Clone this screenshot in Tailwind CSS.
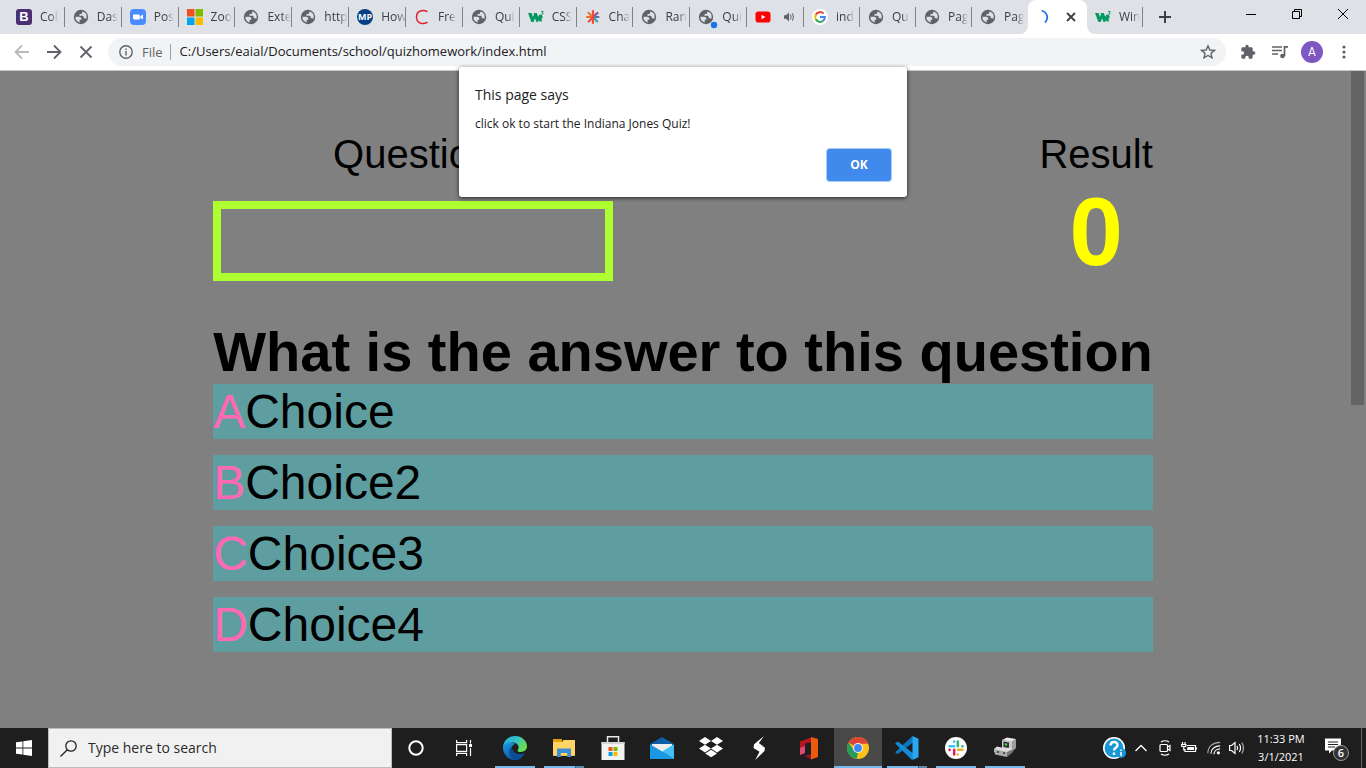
<!DOCTYPE html>
<html lang="en">
<head>
<meta charset="utf-8">
<title>Quiz</title>
<script src="https://cdn.jsdelivr.net/npm/@tailwindcss/browser@4"></script>
</head>
<body class="relative flex min-h-screen flex-col overflow-hidden bg-[#808080] font-['Open_Sans',sans-serif] text-[#202124]">

<svg class="hidden" aria-hidden="true">
  <symbol id="globe" viewBox="0 0 16 16">
    <circle cx="8" cy="8" r="7.200" fill="#5f6368"/>
    <path fill="#dee1e6" d="M2.400 7.800h3.800c1.300 0 2.100.9 2.100 2v.9H6.700v2.700A5.600 5.600 0 0 1 2.400 7.800zM9.200 2.600v.9c0 .9-.7 1.600-1.600 1.600H6.500v1.600h2.700c1 0 1.500.6 1.500 1.400v1.100h1.500c.5 0 .9.3 1.100.7 1.100-3.100 0-6.500-4.100-7.300z"/>
  </symbol>
  <symbol id="w3" viewBox="0 0 16 16">
    <path fill="#059862" d="M0 4h3.600l1.300 3.800L6 5.800 5.400 4h3.400l1.400 3.800 1.300-2.300 1.700.3c1.800.7 2 3 .3 4.200l.5 2.300c-1.200.7-2.600.1-3.200-1.300l-.6 2H8.500L7 9.200 5.600 13H3.400z"/>
    <path fill="none" stroke="#059862" stroke-width="1" d="M13.200 2.500h2L14.200 3.700c1.600.1 1.300 1.900-.9 1.500"/>
  </symbol>
</svg>

<header>
  <div class="flex h-[34px] bg-[#dee1e6] pl-2 text-xs text-[#3c4043]">
    <nav aria-label="Tabs" class="flex min-w-0 flex-1">
      <a href="#" class="relative flex min-w-0 flex-[57] items-center pl-2 after:absolute after:right-0 after:h-5 after:w-px after:bg-[#808388]">
        <span class="flex size-4 shrink-0 items-center justify-center rounded-[3px] bg-[#4a2f73] font-['Liberation_Sans'] text-[13px] font-bold text-white">B</span>
        <span class="ml-2 shrink-0 [mask-image:linear-gradient(to_right,black_60%,transparent)]">Col</span></a>
      <a href="#" class="relative flex min-w-0 flex-[57] items-center pl-2 after:absolute after:right-0 after:h-5 after:w-px after:bg-[#808388]">
        <svg class="size-4 shrink-0"><use href="#globe"/></svg>
        <span class="ml-2 shrink-0 [mask-image:linear-gradient(to_right,black_60%,transparent)]">Das</span></a>
      <a href="#" class="relative flex min-w-0 flex-[57] items-center pl-2 after:absolute after:right-0 after:h-5 after:w-px after:bg-[#808388]">
        <svg class="size-4 shrink-0" viewBox="0 0 16 16"><rect width="16" height="16" rx="4" fill="#4a8cff"/><path fill="#fff" d="M3 5.500h5.500c.8 0 1.300.5 1.300 1.200v3.800H4.300C3.500 10.500 3 10 3 9.300zM10.300 7.200 13 5.500v5l-2.700-1.700z"/></svg>
        <span class="ml-2 shrink-0 [mask-image:linear-gradient(to_right,black_60%,transparent)]">Pos</span></a>
      <a href="#" class="relative flex min-w-0 flex-[57] items-center pl-2 after:absolute after:right-0 after:h-5 after:w-px after:bg-[#808388]">
        <svg class="size-4 shrink-0" viewBox="0 0 16 16"><path fill="#f25022" d="M0 0h7.500v7.500H0z"/><path fill="#7fba00" d="M8.500 0H16v7.500H8.500z"/><path fill="#00a4ef" d="M0 8.500h7.500V16H0z"/><path fill="#ffb900" d="M8.500 8.500H16V16H8.500z"/></svg>
        <span class="ml-2 shrink-0 [mask-image:linear-gradient(to_right,black_60%,transparent)]">Zoo</span></a>
      <a href="#" class="relative flex min-w-0 flex-[57] items-center pl-2 after:absolute after:right-0 after:h-5 after:w-px after:bg-[#808388]">
        <svg class="size-4 shrink-0"><use href="#globe"/></svg>
        <span class="ml-2 shrink-0 [mask-image:linear-gradient(to_right,black_60%,transparent)]">Exte</span></a>
      <a href="#" class="relative flex min-w-0 flex-[57] items-center pl-2 after:absolute after:right-0 after:h-5 after:w-px after:bg-[#808388]">
        <svg class="size-4 shrink-0"><use href="#globe"/></svg>
        <span class="ml-2 shrink-0 [mask-image:linear-gradient(to_right,black_60%,transparent)]">http</span></a>
      <a href="#" class="relative flex min-w-0 flex-[57] items-center pl-2 after:absolute after:right-0 after:h-5 after:w-px after:bg-[#808388]">
        <span class="flex size-4 shrink-0 items-center justify-center rounded-full bg-[#063f86] text-[9px] font-bold text-white">MP</span>
        <span class="ml-2 shrink-0 [mask-image:linear-gradient(to_right,black_60%,transparent)]">How</span></a>
      <a href="#" class="relative flex min-w-0 flex-[57] items-center pl-2 after:absolute after:right-0 after:h-5 after:w-px after:bg-[#808388]">
        <svg class="size-4 shrink-0" viewBox="0 0 16 16" fill="none" stroke="#e0202c" stroke-width="1.500"><path d="M13.500 2.600C9 .2 2.500 1.500 2.500 8s6.500 8 11 5.200"/></svg>
        <span class="ml-2 shrink-0 [mask-image:linear-gradient(to_right,black_60%,transparent)]">Fre</span></a>
      <a href="#" class="relative flex min-w-0 flex-[57] items-center pl-2 after:absolute after:right-0 after:h-5 after:w-px after:bg-[#808388]">
        <svg class="size-4 shrink-0"><use href="#globe"/></svg>
        <span class="ml-2 shrink-0 [mask-image:linear-gradient(to_right,black_60%,transparent)]">Qui</span></a>
      <a href="#" class="relative flex min-w-0 flex-[57] items-center pl-2 after:absolute after:right-0 after:h-5 after:w-px after:bg-[#808388]">
        <svg class="size-4 shrink-0"><use href="#w3"/></svg>
        <span class="ml-2 shrink-0 [mask-image:linear-gradient(to_right,black_60%,transparent)]">CSS</span></a>
      <a href="#" class="relative flex min-w-0 flex-[57] items-center pl-2 after:absolute after:right-0 after:h-5 after:w-px after:bg-[#808388]">
        <svg class="size-4 shrink-0" viewBox="0 0 16 16" stroke-width="2.200" stroke-linecap="round"><path stroke="#8b4a9c" d="m8 8 4.500-4"/><path stroke="#5a6fb0" d="M8 8h5.500"/><path stroke="#35a5b0" d="m8 8 4.300 4.500"/><path stroke="#f5702c" d="M8 8 3.500 4M8 8H2"/><path stroke="#f04a3c" d="m8 8-4.200 4.500M8 2v12"/></svg>
        <span class="ml-2 shrink-0 [mask-image:linear-gradient(to_right,black_60%,transparent)]">Cha</span></a>
      <a href="#" class="relative flex min-w-0 flex-[57] items-center pl-2 after:absolute after:right-0 after:h-5 after:w-px after:bg-[#808388]">
        <svg class="size-4 shrink-0"><use href="#globe"/></svg>
        <span class="ml-2 shrink-0 [mask-image:linear-gradient(to_right,black_60%,transparent)]">Ran</span></a>
      <a href="#" class="relative flex min-w-0 flex-[57] items-center pl-2 after:absolute after:right-0 after:h-5 after:w-px after:bg-[#808388]">
        <svg class="size-4 shrink-0 overflow-visible" viewBox="0 0 16 16"><use href="#globe" width="16" height="16"/><circle cx="16" cy="16" r="3.200" fill="#1a73e8"/></svg>
        <span class="ml-2 shrink-0 [mask-image:linear-gradient(to_right,black_60%,transparent)]">Qui</span></a>
      <a href="#" aria-label="YouTube, playing audio" class="relative flex min-w-0 flex-[57] items-center pl-2 after:absolute after:right-0 after:h-5 after:w-px after:bg-[#808388]">
        <svg class="size-4 shrink-0" viewBox="0 0 16 16"><rect x=".5" y="2.500" width="15" height="11" rx="2.800" fill="#f00"/><path fill="#fff" d="m6.500 5.700 4 2.300-4 2.300z"/></svg>
        <svg class="ml-3 size-3 shrink-0" viewBox="0 0 12 12"><path fill="#5f6368" d="M1 4.200h2l3-2.700v9l-3-2.700H1z"/><path stroke="#5f6368" fill="none" d="M7.500 3.500q1.200 2.500 0 5M9.500 2.300q1.800 3.700 0 7.400"/></svg></a>
      <a href="#" class="relative flex min-w-0 flex-[56] items-center pl-2 after:absolute after:right-0 after:h-5 after:w-px after:bg-[#808388]">
        <svg class="size-4 shrink-0" viewBox="0 0 16 16" fill="none" stroke-width="2"><circle cx="8" cy="8" r="8" fill="#fff"/><path stroke="#ea4335" d="M3.600 6A4.800 4.800 0 0 1 11.600 4.700"/><path stroke="#fbbc05" d="M3.800 5.600a5 5 0 0 0 0 4.800"/><path stroke="#34a853" d="M3.800 10.300a4.800 4.800 0 0 0 7.400 1.400"/><path stroke="#4285f4" d="M8 8h4.900a4.700 4.700 0 0 1-1.900 3.800"/></svg>
        <span class="ml-2 shrink-0 [mask-image:linear-gradient(to_right,black_60%,transparent)]">ind</span></a>
      <a href="#" class="relative flex min-w-0 flex-[56] items-center pl-2 after:absolute after:right-0 after:h-5 after:w-px after:bg-[#808388]">
        <svg class="size-4 shrink-0"><use href="#globe"/></svg>
        <span class="ml-2 shrink-0 [mask-image:linear-gradient(to_right,black_60%,transparent)]">Qu</span></a>
      <a href="#" class="relative flex min-w-0 flex-[56] items-center pl-2 after:absolute after:right-0 after:h-5 after:w-px after:bg-[#808388]">
        <svg class="size-4 shrink-0"><use href="#globe"/></svg>
        <span class="ml-2 shrink-0 [mask-image:linear-gradient(to_right,black_60%,transparent)]">Pag</span></a>
      <a href="#" class="flex min-w-0 flex-[56] items-center pl-2">
        <svg class="size-4 shrink-0"><use href="#globe"/></svg>
        <span class="ml-2 shrink-0 [mask-image:linear-gradient(to_right,black_60%,transparent)]">Pag</span></a>
      <div class="relative z-10 flex min-w-0 flex-[57_1_0%] items-center justify-end gap-4 rounded-t-lg bg-white pr-[10px]">
        <svg class="absolute bottom-0 -left-2 size-2" viewBox="0 0 8 8"><path fill="#fff" d="M8 0v8H0a8 8 0 0 0 8-8z"/></svg>
        <svg class="absolute -right-2 bottom-0 size-2" viewBox="0 0 8 8"><path fill="#fff" d="M0 0v8h8a8 8 0 0 1-8-8z"/></svg>
        <svg class="h-4 w-2" viewBox="0 0 8 16" fill="none" stroke="#1a73e8" stroke-width="1.800"><path d="M.5 1.500C6.500 3.500 8 9.500 4 13.500"/></svg>
        <button aria-label="Close tab" class="flex size-3 items-center justify-center"><svg class="size-3" viewBox="0 0 12 12" stroke="#3c4043" stroke-width="1.800"><path d="m2 2 8 8M10 2l-8 8"/></svg></button>
      </div>
      <a href="#" class="relative flex min-w-0 flex-[56] items-center pl-2 after:absolute after:right-0 after:h-5 after:w-px after:bg-[#808388]">
        <svg class="size-4 shrink-0"><use href="#w3"/></svg>
        <span class="ml-2 shrink-0 [mask-image:linear-gradient(to_right,black_60%,transparent)]">Win</span></a>
    </nav>
    <div class="flex w-[223px] shrink-0 justify-between">
      <button aria-label="New tab" class="flex w-11 items-center justify-center"><svg class="size-3" viewBox="0 0 12 12" stroke="#3c4043" stroke-width="2"><path d="M6 0v12M0 6h12"/></svg></button>
      <div class="flex h-7">
        <button aria-label="Minimize" class="flex w-[46px] items-center justify-center"><svg class="size-[10px]" viewBox="0 0 10 10" stroke="#000"><path d="M0 5.500h10"/></svg></button>
        <button aria-label="Restore" class="flex w-[46px] items-center justify-center"><svg class="size-[10px]" viewBox="0 0 10 10" fill="none" stroke="#000"><path d="M.5 2.500h7v7h-7zM2.500 2.500v-2h7v7h-2"/></svg></button>
        <button aria-label="Close window" class="flex w-[46px] items-center justify-center"><svg class="size-[10px]" viewBox="0 0 10 10" stroke="#000"><path d="m0 0 10 10M10 0 0 10"/></svg></button>
      </div>
    </div>
  </div>

  <div class="flex h-[37px] items-center border-b border-[#c6c8ca] bg-white px-[14px]">
    <div class="flex gap-4 pr-[14px]">
      <button aria-label="Back"><svg class="size-4" viewBox="0 0 16 16" fill="none" stroke="#bababa" stroke-width="1.800"><path d="M15 8H2M8 1.500 1.500 8 8 14.500"/></svg></button>
      <button aria-label="Forward"><svg class="size-4" viewBox="0 0 16 16" fill="none" stroke="#5f6368" stroke-width="1.800"><path d="M1 8h13M8 1.500 14.500 8 8 14.500"/></svg></button>
      <button aria-label="Stop loading"><svg class="size-4" viewBox="0 0 16 16" stroke="#5f6368" stroke-width="1.800"><path d="m2.500 2.500 11 11M13.500 2.500l-11 11"/></svg></button>
    </div>
    <div class="flex h-7 min-w-0 flex-1 items-center rounded-full bg-[#f1f3f4] pr-[10px] pl-[11px] text-[13px]">
      <svg class="size-[14px] shrink-0" viewBox="0 0 14 14" fill="none" stroke="#5f6368" stroke-width="1.400"><circle cx="7" cy="7" r="6.200"/><path d="M7 6v4.500M7 3.400v1.500"/></svg>
      <label for="url" class="ml-[9px] border-r border-[#9aa0a6] pr-[7px] leading-4 text-[#5f6368]">File</label>
      <input id="url" class="ml-[9px] min-w-0 flex-1 bg-transparent outline-none" value="C:/Users/eaial/Documents/school/quizhomework/index.html">
      <button aria-label="Bookmark"><svg class="size-4" viewBox="0 0 16 16" fill="none" stroke="#5f6368" stroke-width="1.400"><path d="m8 1.800 1.800 4.200 4.600.4-3.500 3 1.100 4.500L8 11.500l-4 2.400 1.100-4.500-3.500-3L6.200 6z"/></svg></button>
    </div>
    <div class="flex items-center pl-[14px]">
      <button aria-label="Extensions"><svg class="size-4" viewBox="0 0 24 24" fill="#5f6368"><path d="M20.500 11H19V7c0-1.100-.9-2-2-2h-4V3.500a2.500 2.500 0 0 0-5 0V5H4c-1.100 0-2 .9-2 2v3.800h1.500a2.700 2.700 0 0 1 0 5.400H2V20c0 1.100.9 2 2 2h3.800v-1.500a2.700 2.700 0 0 1 5.400 0V22H17c1.100 0 2-.9 2-2v-4h1.500a2.500 2.500 0 0 0 0-5z"/></svg></button>
      <button aria-label="Media controls" class="ml-4"><svg class="size-4" viewBox="0 0 16 16" fill="none" stroke="#5f6368" stroke-width="1.700"><path d="M0 3h10M0 6.500h10M0 10h6M16 2.800h-3.500V12"/><circle cx="10.500" cy="12" r="1.500" fill="#5f6368"/></svg></button>
      <button aria-label="Profile" class="ml-[13px] flex size-[22px] items-center justify-center rounded-full bg-[#7e57c2] font-[Roboto] text-xs text-white">A</button>
      <button aria-label="Menu" class="ml-[13px]"><svg class="size-4" viewBox="0 0 16 16" fill="#5f6368"><circle cx="8" cy="3" r="1.600"/><circle cx="8" cy="8" r="1.600"/><circle cx="8" cy="13" r="1.600"/></svg></button>
    </div>
  </div>
</header>

<main class="relative flex flex-1 justify-center pt-[60px] font-['Liberation_Sans',sans-serif] text-black">
  <div class="absolute top-0 right-[2px] h-[334px] w-[13px] bg-[#646464]"></div>
  <section class="w-fit">
    <div class="flex justify-between">
      <div class="w-[400px]">
        <p class="text-center text-[40px] leading-[46px]">Question</p>
        <div role="progressbar" aria-label="Question progress" class="mt-6 h-20 border-8 border-[#adff2f]"></div>
      </div>
      <div class="text-center">
        <p class="text-[40px] leading-[46px]">Result</p>
        <p class="text-8xl leading-[110px] font-bold text-[#ffff00]">0</p>
      </div>
    </div>
    <h1 class="mt-[33px] text-[56px] leading-[64px] font-bold whitespace-nowrap">What is the answer to this question</h1>
    <div class="flex flex-col gap-4 text-5xl">
      <button class="bg-[#5f9ea0] text-left leading-[55px]"><span class="text-[#ff69b4]">A</span>Choice</button>
      <button class="bg-[#5f9ea0] text-left leading-[55px]"><span class="text-[#ff69b4]">B</span>Choice2</button>
      <button class="bg-[#5f9ea0] text-left leading-[55px]"><span class="text-[#ff69b4]">C</span>Choice3</button>
      <button class="bg-[#5f9ea0] text-left leading-[55px]"><span class="text-[#ff69b4]">D</span>Choice4</button>
    </div>
  </section>
</main>

<div role="dialog" aria-labelledby="dlg" class="absolute top-[67px] left-1/2 flex w-[448px] -translate-x-1/2 flex-col rounded-[3px] bg-white p-4 shadow-[0_1px_4px_rgba(0,0,0,0.7)]">
  <h2 id="dlg" class="text-sm leading-6">This page says</h2>
  <p class="mt-[7px] text-xs leading-5">click ok to start the Indiana Jones Quiz!</p>
  <button class="mt-[15px] h-8 w-16 self-end rounded-[3px] bg-[#3f8aec] text-xs font-bold text-white ring-1 ring-[#a9cbf7]">OK</button>
</div>

<footer class="flex h-10 items-stretch bg-[#1e1e1e] text-white">
  <button aria-label="Start" class="flex w-12 items-center justify-center"><svg class="size-4" viewBox="0 0 16 16" fill="#fff"><path d="M0 2.300 6.500 1.400v6.100H0zM7.300 1.300 16 0v7.500H7.300zM0 8.400h6.500v6.100L0 13.700zM7.300 8.400H16V16l-8.700-1.300z"/></svg></button>
  <label class="flex w-[344px] items-center border border-[#bcbcbc] bg-[#f1f1f1] pl-[11px] text-[#2b2b2b]">
    <svg class="size-[17px]" viewBox="0 0 17 17" fill="none" stroke="#222" stroke-width="1.300"><circle cx="11" cy="6" r="5.200"/><path d="M7.300 9.700.5 16.500"/></svg>
    <input aria-label="Search" class="ml-[11px] min-w-0 flex-1 bg-transparent text-sm outline-none placeholder:text-[#2b2b2b]" placeholder="Type here to search">
  </label>
  <button aria-label="Cortana" class="flex w-12 items-center justify-center"><svg class="size-4" viewBox="0 0 16 16" fill="none" stroke="#fff" stroke-width="2"><circle cx="8" cy="8" r="6.700"/></svg></button>
  <button aria-label="Task view" class="flex w-12 items-center justify-center"><svg class="size-4" viewBox="0 0 16 16" fill="none" stroke="#fff" stroke-width="1.200"><path d="M.6 0v2.600h10V0M.6 16v-2.600h10V16M.6 4.600h10v6.800H.6zM14.500 0v3.500M14.500 8v8"/><path fill="#fff" stroke="none" d="M13 4h3v3h-3z"/></svg></button>
  <div class="ml-[3px] flex gap-px">
    <button aria-label="Edge" class="relative flex w-12 items-center justify-center after:absolute after:bottom-0 after:h-[2px] after:w-10 after:bg-[#76b9ed]">
      <svg class="size-6" viewBox="0 0 24 24"><defs><linearGradient id="e1" x2="1" y2=".5"><stop stop-color="#22a9e8"/><stop offset=".55" stop-color="#35c4c5"/><stop offset="1" stop-color="#6be04c"/></linearGradient><linearGradient id="e2" y2="1" x2=".4"><stop stop-color="#1d9be0"/><stop offset="1" stop-color="#0b57a8"/></linearGradient></defs><path fill="url(#e2)" d="M0 11C1 6 8 4 12.500 8c-3 .5-4 3-3.500 5 .8 4 6 7 12.500 4.200C19.500 21.500 16 24 12 24 5 24-.4 18 0 11z"/><path fill="#0c4c93" d="M9 10c-5 4-3 12 4 13.900 3.500-.2 6.700-2.500 8.500-6.700C14 20 8 15.500 9 10z"/><path fill="url(#e1)" d="M0 11C.7 4.500 5.800 0 12 0c7 0 12 5 12 10.200 0 4.600-5 6.800-8.800 5.200-1.300-.6-.5-1.200.1-2.400C16.800 9.500 13 6 8.500 6 4.500 6 1.200 8 0 11z"/></svg></button>
    <button aria-label="File Explorer" class="relative flex w-12 items-center justify-center after:absolute after:bottom-0 after:h-[2px] after:w-10 after:bg-[linear-gradient(to_right,#76b9ed_31px,#3c5f7a_31px,#3c5f7a_32px,#5788ae_32px)]">
      <svg class="size-6" viewBox="0 0 24 24"><path fill="#e5a10d" d="M1 3h9v5H1z"/><path fill="#ffd566" d="M1 6h9l1.500-2H23v16H1z"/><path fill="#f4bf45" d="M1 19h22v1H1z"/><path fill="#3c8fd6" d="M5 21v-8.500h14V21h-3.800v-4H8.800v4z"/></svg></button>
    <button aria-label="Store" class="flex w-12 items-center justify-center">
      <svg class="size-6" viewBox="0 0 24 24"><path fill="none" stroke="#e8e8e8" stroke-width="1.500" d="M6.500 7V.8h11V7"/><path fill="#f2f2f2" d="M.5 6h23v18H.5z"/><path fill="#d4d4d4" d="M.5 6h23v2H.5z"/><path fill="#f25022" d="M7.500 11h4v4h-4z"/><path fill="#7fba00" d="M12.500 11h4v4h-4z"/><path fill="#00a4ef" d="M7.500 16h4v4h-4z"/><path fill="#ffb900" d="M12.500 16h4v4h-4z"/></svg></button>
    <button aria-label="Mail" class="flex w-12 items-center justify-center">
      <svg class="size-6" viewBox="0 0 24 24"><path fill="#0f5ca8" d="M0 8 12 1l12 7v4H0z"/><path fill="#eee" d="M2 8h20v3l-10 6L2 11z"/><path fill="#1b98e3" d="M0 8.300 13 16l11 7H0z"/><path fill="#42bff4" d="M24 8.300V23L12 15.500z"/></svg></button>
    <button aria-label="Dropbox" class="flex w-12 items-center justify-center">
      <svg class="size-6" viewBox="0 0 24 24" fill="#fff"><path d="m6 1 6 3.900-6 3.800L0 4.900zM18 1l6 3.900-6 3.800-6-3.800zM6 8.700l6 3.900-6 3.800-6-3.800zM18 8.700l6 3.900-6 3.800-6-3.800zM6.200 17.600l5.900-3.900 5.900 3.900-5.900 3.700z"/></svg></button>
    <button aria-label="Stardock" class="flex w-12 items-center justify-center">
      <svg class="size-6" viewBox="0 0 24 24" fill="#fff"><path d="M16 0 6.100 8.300 5.500 12l6 3.800L7.200 24l9.300-9.100.4-3.100-6-4.700z"/></svg></button>
    <button aria-label="Office" class="flex w-12 items-center justify-center">
      <svg class="size-6" viewBox="0 0 24 24"><path fill="#b51720" d="M3 5.500 15 1v5L8 7.500v9.500l-5 2z"/><path fill="#dc4b72" d="m3 12 5-2v7l-5 2z"/><path fill="#8c1527" d="m7 20 8-2v5.500z"/><path fill="#ec5b0d" d="m14 1 7 2v18l-7 2.500z"/></svg></button>
    <button aria-label="Chrome" class="relative flex w-12 items-center justify-center bg-[#484848] after:absolute after:bottom-0 after:h-[2px] after:w-12 after:bg-[#76b9ed]">
      <svg class="size-[22px]" viewBox="0 0 24 24"><circle cx="12" cy="12" r="12" fill="#fbc116"/><path fill="#db4437" d="M12 12 1.600 6a12 12 0 0 1 20.800 0l.6 1.300H12z"/><path fill="#269c58" d="M1.600 6 8 15l4 2.500L10.500 24A12 12 0 0 1 1.600 6z"/><circle cx="12" cy="12" r="5.500" fill="#f1f1f1"/><circle cx="12" cy="12" r="4.300" fill="#4285f4"/></svg></button>
    <button aria-label="Visual Studio Code" class="relative flex w-12 items-center justify-center after:absolute after:bottom-0 after:h-[2px] after:w-10 after:bg-[linear-gradient(to_right,#76b9ed_31px,#3c5f7a_31px,#3c5f7a_32px,#5788ae_32px)]">
      <svg class="size-6" viewBox="0 0 24 24"><path fill="#0b75bd" d="M17.500 0 2 14.500.2 16.300 2 18l1.600-.5L19 5.700z"/><path fill="#148bd4" d="m2 6-1.800 1.500L17 24l2-6L3.600 6z"/><path fill="#29a8f0" d="m17.500 0 6 2.800v18.400L17.500 24z"/></svg></button>
    <button aria-label="Slack" class="relative flex w-12 items-center justify-center after:absolute after:bottom-0 after:h-[2px] after:w-10 after:bg-[#76b9ed]">
      <svg class="size-[22px]" viewBox="0 0 24 24" stroke-width="2.800" stroke-linecap="round"><circle cx="12" cy="12" r="12" fill="#fff"/><path stroke="#36c5f0" d="M10 5v.1M5 10h5"/><path stroke="#2eb67d" d="M14 5v5M19 10v.1"/><path stroke="#ecb22e" d="M14 14h5M14 19v.1"/><path stroke="#e01e5a" d="M10 14v5M5 14v.1"/></svg></button>
    <button aria-label="Devices" class="relative flex w-12 items-center justify-center after:absolute after:bottom-0 after:h-[2px] after:w-10 after:bg-[#76b9ed]">
      <svg class="size-6" viewBox="0 0 24 24"><path fill="#e6e6e6" d="m9 4 5-2.500 9 1.500-4 3z"/><path fill="#c9c9c9" d="m9 4 10 1.500V15H9z"/><path fill="#9c9c9c" d="m19 5.500 4-2.500v9l-4 4z"/><path fill="#303030" d="M10.500 5.500 16 6.500V12l-5.500-1z"/><circle cx="13" cy="8.500" r="1.200" fill="#3be03b"/><path fill="#ddd" d="m1 13 3-2.500 9 2 4-1 3 2-5 5.500-14-3z"/><path fill="#aaa" d="m1 13 13 3v5L2 18.500z"/><path fill="#777" d="m14 16 6-3v3l-6 5z"/><path fill="#555" d="M4 15h2v2H4zM10 16h2v2h-2z"/></svg></button>
  </div>
  <div class="ml-auto flex items-center">
    <button aria-label="Help"><svg class="size-6" viewBox="0 0 24 24"><circle cx="11" cy="12" r="10.200" fill="#1797d4" stroke="#fff" stroke-width="1.600"/><path fill="none" stroke="#fff" stroke-width="2.400" d="M7.500 9.500C7.500 5 14.500 5 14.500 9c0 3-3.500 2.500-3.500 5.500M11 16.500V19"/><circle cx="18" cy="17" r="5" fill="#1797d4"/><path stroke="#fff" stroke-width="1.500" d="M18 16v4M18 13.500V15"/></svg></button>
    <button aria-label="Show hidden icons" class="ml-2"><svg class="size-3" viewBox="0 0 12 12" fill="none" stroke="#fff" stroke-width="1.300"><path d="m.5 9 5.500-5.500L11.500 9"/></svg></button>
    <button aria-label="Meet now" class="ml-[10px]"><svg class="size-4" viewBox="0 0 16 16" fill="none" stroke="#fff" stroke-width="1.200"><rect x="3" y="4.500" width="7.500" height="7" rx="1"/><path d="m10.500 7 2.500-1.500v5L10.500 9M4 2q4-2.500 8 0M4 14q4 2.500 8 0"/></svg></button>
    <button aria-label="Battery" class="ml-2"><svg class="size-4" viewBox="0 0 16 16" fill="none" stroke="#fff" stroke-width="1.200"><path d="M6 5.500h8.500v6H4V9M15.500 7.500v2M1.500 2v2M4 2v2M0 4.500h5.500M.8 4.500v2h4v-2M2.800 6.500V10H4"/><path fill="#fff" stroke="none" d="M6.500 7H13v3H6z"/></svg></button>
    <button aria-label="Network" class="ml-[10px]"><svg class="size-[14px]" viewBox="0 0 16 16" fill="none" stroke="#fff" stroke-width="1.300"><path stroke="#aaa" d="M1 14C1 6 7 1.500 15 1.500"/><path d="M4.500 14.500c0-5.500 4.500-9 10.500-9M8 15c0-3.500 3-6 7-6"/><circle cx="13" cy="13.500" r="1.800" fill="#fff" stroke="none"/></svg></button>
    <button aria-label="Volume" class="ml-2"><svg class="size-4" viewBox="0 0 16 16" fill="none" stroke="#fff" stroke-width="1.200"><path d="M.6 5.500h2l3.400-3v11l-3.400-3h-2zM8 6q1.200 2 0 4M10.300 4q2.500 4 0 8"/><path stroke="#aaa" d="M12.800 2.500q3.400 5.500 0 11"/></svg></button>
    <div class="w-[72px] text-center text-[11px] leading-[18px]"><p>11:33 PM</p><p>3/1/2021</p></div>
    <button aria-label="Notifications, 6 new" class="relative mr-3 ml-2 h-7 w-6"><svg class="absolute top-1 left-0 size-4" viewBox="0 0 16 16"><path fill="#fff" d="M0 .5h16v12H7L4 15.500v-3H0z"/><path stroke="#222" d="M3 4h10M3 6.500h10M3 9h7"/></svg><span class="absolute top-[11px] left-2 flex size-4 items-center justify-center rounded-full border border-[#999] bg-[#333] text-[11px] font-semibold">6</span></button>
    <div class="mr-1 h-full w-px bg-[#666]"></div>
  </div>
</footer>
</body>
</html>
